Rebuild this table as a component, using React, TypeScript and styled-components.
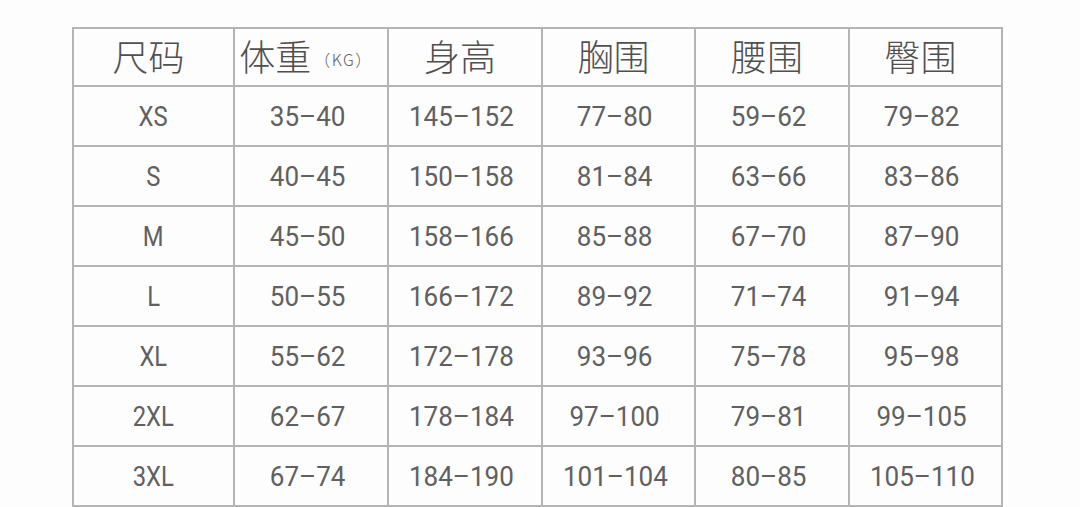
import styled, { createGlobalStyle } from 'styled-components';

const GlobalStyle = createGlobalStyle`
    html, body {
        margin: 0;
        padding: 0;
        background: #ffffff;
    }
`;

const Page = styled.main`
    width: 1080px;
    height: 507px;
    padding: 27px 0 0 72px;
    box-sizing: border-box;
    overflow: hidden;
    background: #fdfdfd;
`;

const Table = styled.table`
    border-collapse: collapse;
    table-layout: fixed;
    width: 929px;
    color: #606060;
    font-family: Roboto, "Noto Sans CJK SC", sans-serif;
`;

const HeadCell = styled.th`
    height: 51px;
    padding: 0 10px 5px 0;
    border: 2px solid #b4b4b4;
    font-family: "Noto Sans CJK SC", sans-serif;
    font-weight: 300;
    font-size: 36px;
    line-height: 1;
    color: #505050;
    text-align: center;
    vertical-align: middle;
    white-space: nowrap;

    small {
        font-size: 16px;
        margin-left: 3px;
        letter-spacing: 1.5px;
        vertical-align: 5px;
        color: #606060;
    }
`;

const Cell = styled.td<{ $first?: boolean }>`
    height: 58px;
    padding: 0 ${(p) => (p.$first ? '0' : '7px')} 0 0;
    border: 2px solid #b4b4b4;
    font-size: 28px;
    text-align: center;
    vertical-align: middle;

    span {
        display: inline-block;
        transform: scaleX(${(p) => (p.$first ? 0.85 : 0.93)});
    }
`;

const widths = [161, 154, 154, 153, 154, 153];

const rows = [
    ['XS', '35–40', '145–152', '77–80', '59–62', '79–82'],
    ['S', '40–45', '150–158', '81–84', '63–66', '83–86'],
    ['M', '45–50', '158–166', '85–88', '67–70', '87–90'],
    ['L', '50–55', '166–172', '89–92', '71–74', '91–94'],
    ['XL', '55–62', '172–178', '93–96', '75–78', '95–98'],
    ['2XL', '62–67', '178–184', '97–100', '79–81', '99–105'],
    ['3XL', '67–74', '184–190', '101–104', '80–85', '105–110'],
];

function App() {
    return (
        <>
            <GlobalStyle />
            <Page>
                <Table>
                    <colgroup>
                        {widths.map((w, i) => (
                            <col key={i} style={{ width: w }} />
                        ))}
                    </colgroup>
                    <thead>
                        <tr>
                            <HeadCell>尺码</HeadCell>
                            <HeadCell>
                                体重<small>（KG）</small>
                            </HeadCell>
                            <HeadCell>身高</HeadCell>
                            <HeadCell>胸围</HeadCell>
                            <HeadCell>腰围</HeadCell>
                            <HeadCell>臀围</HeadCell>
                        </tr>
                    </thead>
                    <tbody>
                        {rows.map((row) => (
                            <tr key={row[0]}>
                                {row.map((v, i) => (
                                    <Cell key={i} $first={i === 0}>
                                        <span>{v}</span>
                                    </Cell>
                                ))}
                            </tr>
                        ))}
                    </tbody>
                </Table>
            </Page>
        </>
    );
}

export default App;
